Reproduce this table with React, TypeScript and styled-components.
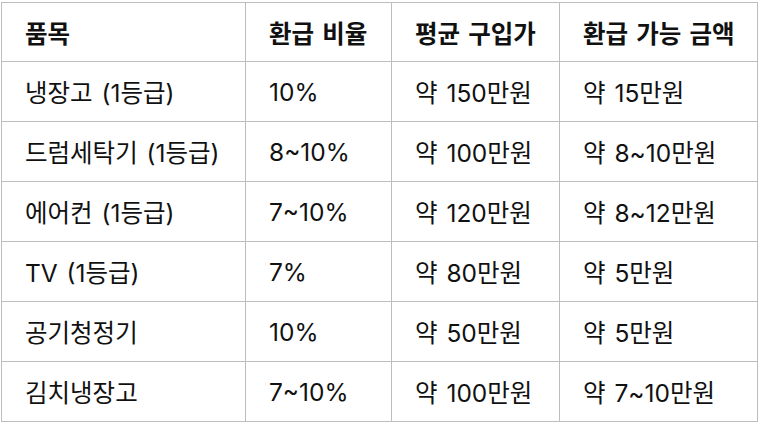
import React from "react";
import styled, { createGlobalStyle } from "styled-components";

const Global = createGlobalStyle`
  html, body { margin: 0; padding: 0; background: #ffffff; }
  body { font-family: Inter, "Noto Sans CJK KR", sans-serif; color: #111111; }
`;

const Page = styled.div`
  padding: 2px 10px 0 1px;
`;

const Table = styled.table`
  border-collapse: collapse;
  width: 756px;
  table-layout: fixed;
  font-size: 24.5px;
  word-spacing: 2px;
`;

const HeadCell = styled.th<{ $w: number }>`
  width: ${(p) => p.$w}px;
  height: 59px;
  padding: 0 0 0 23px;
  border: 1px solid #bdbdbd;
  text-align: left;
  font-weight: 600;
  box-sizing: border-box;
  white-space: nowrap;
`;

const Cell = styled.td`
  height: 60px;
  padding: 0 0 0 23px;
  border: 1px solid #bdbdbd;
  text-align: left;
  font-weight: 400;
  box-sizing: border-box;
  white-space: nowrap;
`;

const cols = [
  { label: "품목", w: 244 },
  { label: "환급 비율", w: 146 },
  { label: "평균 구입가", w: 168 },
  { label: "환급 가능 금액", w: 198 },
];

const rows = [
  ["냉장고 (1등급)", "10%", "약 150만원", "약 15만원"],
  ["드럼세탁기 (1등급)", "8~10%", "약 100만원", "약 8~10만원"],
  ["에어컨 (1등급)", "7~10%", "약 120만원", "약 8~12만원"],
  ["TV (1등급)", "7%", "약 80만원", "약 5만원"],
  ["공기청정기", "10%", "약 50만원", "약 5만원"],
  ["김치냉장고", "7~10%", "약 100만원", "약 7~10만원"],
];

export default function App() {
  return (
    <>
      <Global />
      <Page>
        <Table>
          <thead>
            <tr>
              {cols.map((c) => (
                <HeadCell key={c.label} $w={c.w}>
                  {c.label}
                </HeadCell>
              ))}
            </tr>
          </thead>
          <tbody>
            {rows.map((r) => (
              <tr key={r[0]}>
                {r.map((v, i) => (
                  <Cell key={i}>{v}</Cell>
                ))}
              </tr>
            ))}
          </tbody>
        </Table>
      </Page>
    </>
  );
}
